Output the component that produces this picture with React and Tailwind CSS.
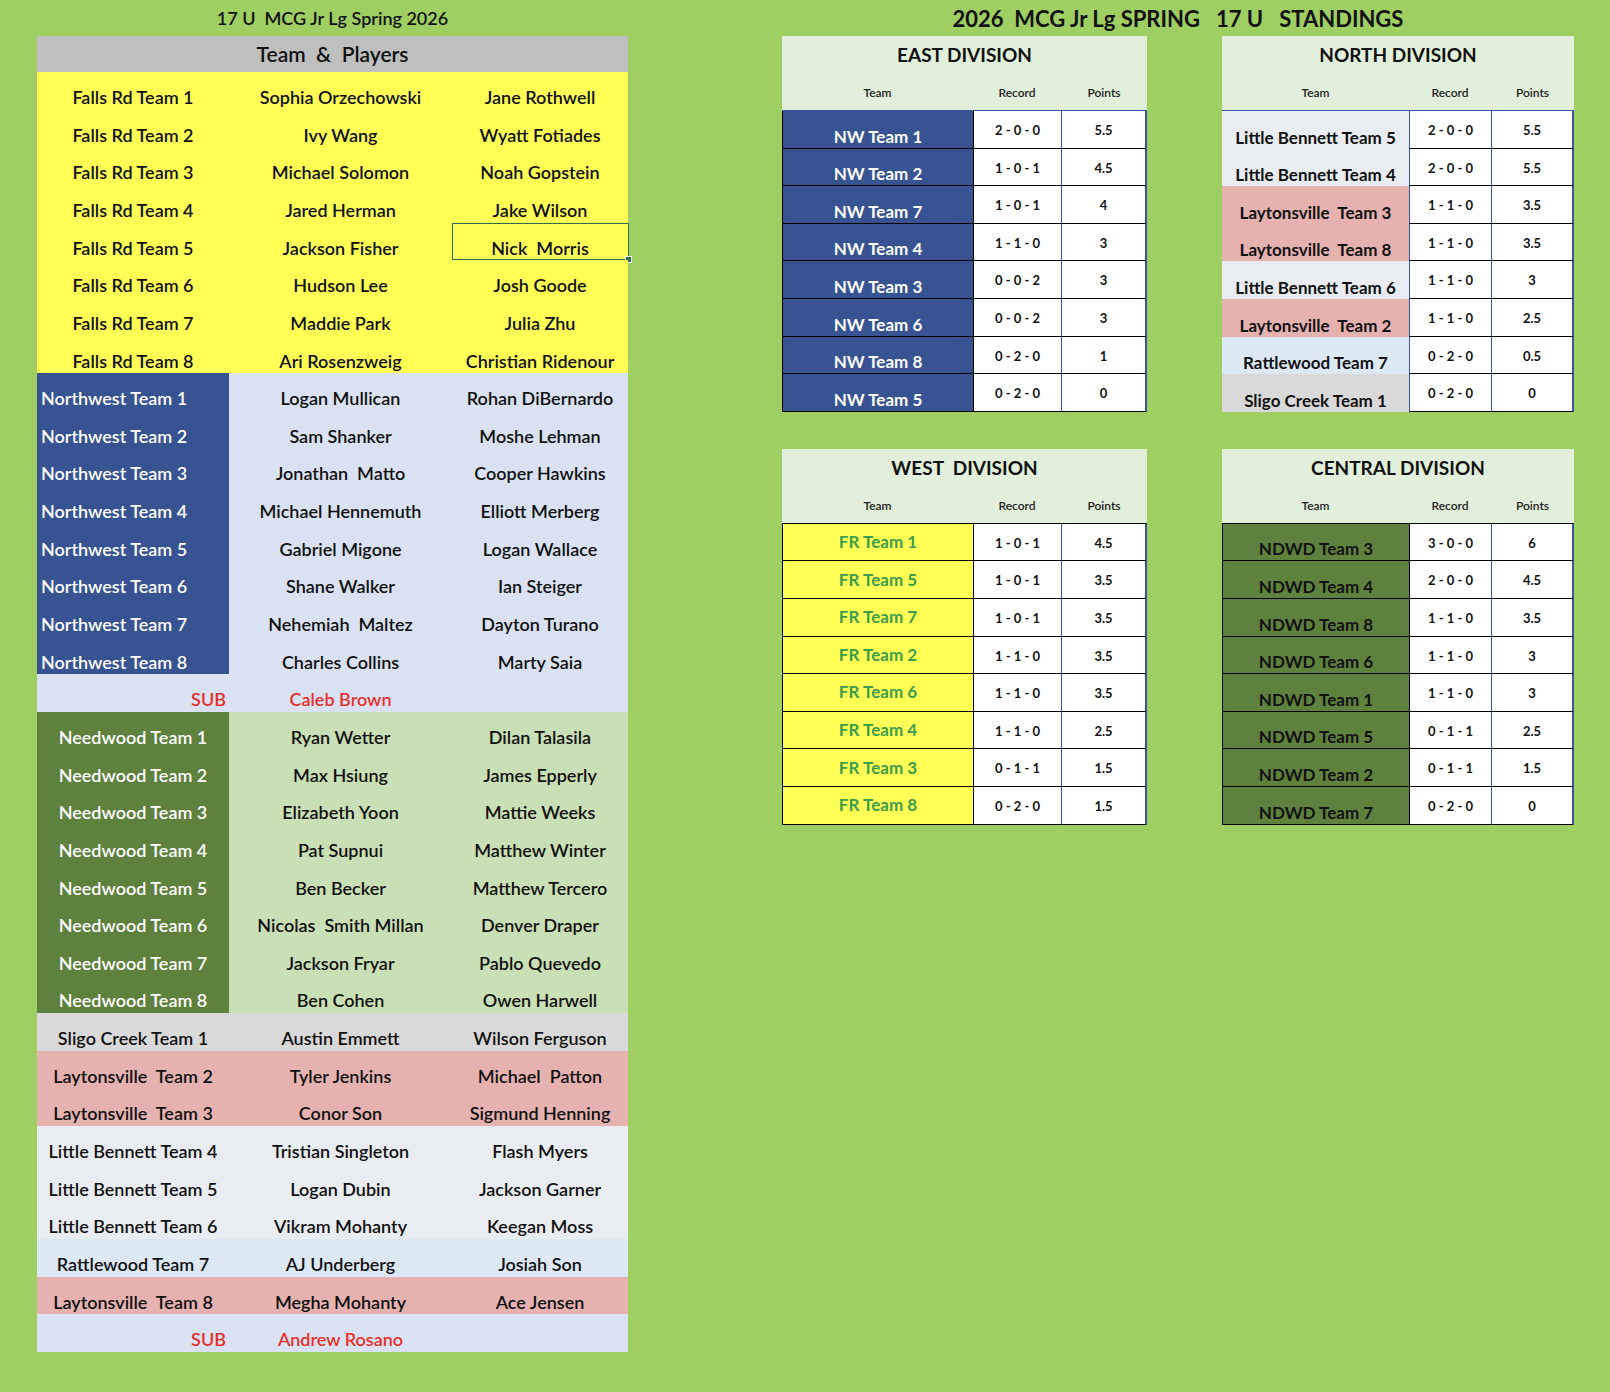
import React from "react";

const font = { fontFamily: "Lato, 'Open Sans', sans-serif" };

// left roster table
const roster = [
  ["Falls Rd Team 1", "Sophia Orzechowski", "Jane Rothwell", "fr"],
  ["Falls Rd Team 2", "Ivy Wang", "Wyatt Fotiades", "fr"],
  ["Falls Rd Team 3", "Michael Solomon", "Noah Gopstein", "fr"],
  ["Falls Rd Team 4", "Jared Herman", "Jake Wilson", "fr"],
  ["Falls Rd Team 5", "Jackson Fisher", "Nick  Morris", "fr", true],
  ["Falls Rd Team 6", "Hudson Lee", "Josh Goode", "fr"],
  ["Falls Rd Team 7", "Maddie Park", "Julia Zhu", "fr"],
  ["Falls Rd Team 8", "Ari Rosenzweig", "Christian Ridenour", "fr"],
  ["Northwest Team 1", "Logan Mullican", "Rohan DiBernardo", "nw"],
  ["Northwest Team 2", "Sam Shanker", "Moshe Lehman", "nw"],
  ["Northwest Team 3", "Jonathan  Matto", "Cooper Hawkins", "nw"],
  ["Northwest Team 4", "Michael Hennemuth", "Elliott Merberg", "nw"],
  ["Northwest Team 5", "Gabriel Migone", "Logan Wallace", "nw"],
  ["Northwest Team 6", "Shane Walker", "Ian Steiger", "nw"],
  ["Northwest Team 7", "Nehemiah  Maltez", "Dayton Turano", "nw"],
  ["Northwest Team 8", "Charles Collins", "Marty Saia", "nw"],
  ["SUB", "Caleb Brown", "", "sub"],
  ["Needwood Team 1", "Ryan Wetter", "Dilan Talasila", "nd"],
  ["Needwood Team 2", "Max Hsiung", "James Epperly", "nd"],
  ["Needwood Team 3", "Elizabeth Yoon", "Mattie Weeks", "nd"],
  ["Needwood Team 4", "Pat Supnui", "Matthew Winter", "nd"],
  ["Needwood Team 5", "Ben Becker", "Matthew Tercero", "nd"],
  ["Needwood Team 6", "Nicolas  Smith Millan", "Denver Draper", "nd"],
  ["Needwood Team 7", "Jackson Fryar", "Pablo Quevedo", "nd"],
  ["Needwood Team 8", "Ben Cohen", "Owen Harwell", "nd"],
  ["Sligo Creek Team 1", "Austin Emmett", "Wilson Ferguson", "sc"],
  ["Laytonsville  Team 2", "Tyler Jenkins", "Michael  Patton", "lay"],
  ["Laytonsville  Team 3", "Conor Son", "Sigmund Henning", "lay"],
  ["Little Bennett Team 4", "Tristian Singleton", "Flash Myers", "lb"],
  ["Little Bennett Team 5", "Logan Dubin", "Jackson Garner", "lb"],
  ["Little Bennett Team 6", "Vikram Mohanty", "Keegan Moss", "lb"],
  ["Rattlewood Team 7", "AJ Underberg", "Josiah Son", "rw"],
  ["Laytonsville  Team 8", "Megha Mohanty", "Ace Jensen", "lay"],
  ["SUB", "Andrew Rosano", "", "sub"],
];

const groupStyle = {
  fr: { first: "bg-[#ffff55] justify-center text-[#111]", rest: "bg-[#ffff55] text-[#111]" },
  nw: { first: "bg-[#375391] justify-start pl-[4px] text-white", rest: "bg-[#d9e1f2] text-[#111]" },
  sub: { first: "bg-[#d9e1f2] justify-end pr-[3px] text-[#e8302b]", rest: "bg-[#d9e1f2] text-[#e8302b]" },
  nd: { first: "bg-[#5e813d] justify-center text-white", rest: "bg-[#c9dfb6] text-[#111]" },
  sc: { first: "bg-[#d9d9d9] justify-center text-[#111]", rest: "bg-[#d9d9d9] text-[#111]" },
  lay: { first: "bg-[#e6b2b0] justify-center text-[#111]", rest: "bg-[#e6b2b0] text-[#111]" },
  lb: { first: "bg-[#e9ecf0] justify-center text-[#111]", rest: "bg-[#e9ecf0] text-[#111]" },
  rw: { first: "bg-[#dde8f5] justify-center text-[#111]", rest: "bg-[#dde8f5] text-[#111]" },
};

function RosterRow({ row }) {
  const [team, p1, p2, group, selected] = row;
  const s = groupStyle[group];
  return (
    <div className="grid grid-cols-[192px_223px_176px] h-[37.65px] text-[18px] font-semibold leading-[21.6px] whitespace-pre">
      <div className={`flex items-end pb-[1px] ${s.first}`}>{team}</div>
      <div className={`flex items-end justify-center pb-[1px] ${s.rest}`}>{p1}</div>
      <div className={`relative flex items-end justify-center pb-[1px] ${s.rest} ${group === "sub" ? "text-[#111]" : ""}`}>
        {p2}
        {selected && (
          <div className="absolute inset-0 -right-[1px] border border-[#2c6e4c]">
            <div className="absolute -right-[4px] -bottom-[4px] w-[7px] h-[7px] bg-[#2c6e4c] border border-white" />
          </div>
        )}
      </div>
    </div>
  );
}

// standings
const east = [
  ["NW Team 1", "2 - 0 - 0", "5.5"],
  ["NW Team 2", "1 - 0 - 1", "4.5"],
  ["NW Team 7", "1 - 0 - 1", "4"],
  ["NW Team 4", "1 - 1 - 0", "3"],
  ["NW Team 3", "0 - 0 - 2", "3"],
  ["NW Team 6", "0 - 0 - 2", "3"],
  ["NW Team 8", "0 - 2 - 0", "1"],
  ["NW Team 5", "0 - 2 - 0", "0"],
];
const north = [
  ["Little Bennett Team 5", "2 - 0 - 0", "5.5", "bg-[#e9ecf0]"],
  ["Little Bennett Team 4", "2 - 0 - 0", "5.5", "bg-[#e9ecf0]"],
  ["Laytonsville  Team 3", "1 - 1 - 0", "3.5", "bg-[#e6b2b0]"],
  ["Laytonsville  Team 8", "1 - 1 - 0", "3.5", "bg-[#e6b2b0]"],
  ["Little Bennett Team 6", "1 - 1 - 0", "3", "bg-[#e9ecf0]"],
  ["Laytonsville  Team 2", "1 - 1 - 0", "2.5", "bg-[#e6b2b0]"],
  ["Rattlewood Team 7", "0 - 2 - 0", "0.5", "bg-[#dde8f5]"],
  ["Sligo Creek Team 1", "0 - 2 - 0", "0", "bg-[#d9d9d9]"],
];
const west = [
  ["FR Team 1", "1 - 0 - 1", "4.5"],
  ["FR Team 5", "1 - 0 - 1", "3.5"],
  ["FR Team 7", "1 - 0 - 1", "3.5"],
  ["FR Team 2", "1 - 1 - 0", "3.5"],
  ["FR Team 6", "1 - 1 - 0", "3.5"],
  ["FR Team 4", "1 - 1 - 0", "2.5"],
  ["FR Team 3", "0 - 1 - 1", "1.5"],
  ["FR Team 8", "0 - 2 - 0", "1.5"],
];
const central = [
  ["NDWD Team 3", "3 - 0 - 0", "6"],
  ["NDWD Team 4", "2 - 0 - 0", "4.5"],
  ["NDWD Team 8", "1 - 1 - 0", "3.5"],
  ["NDWD Team 6", "1 - 1 - 0", "3"],
  ["NDWD Team 1", "1 - 1 - 0", "3"],
  ["NDWD Team 5", "0 - 1 - 1", "2.5"],
  ["NDWD Team 2", "0 - 1 - 1", "1.5"],
  ["NDWD Team 7", "0 - 2 - 0", "0"],
];

function Division({ title, rows, wide, teamClass, recordBorder, bodyTop }) {
  const cols = wide ? "grid-cols-[191px_88px_86px]" : "grid-cols-[187px_82px_83px]";
  return (
    <div className={wide ? "w-[365px]" : "w-[352px]"}>
      <div className="bg-[#e2efda]">
        <div className="h-[38px] flex items-end justify-center text-[19px] font-bold leading-[22px] pb-[8px] text-[#111] whitespace-pre">
          {title}
        </div>
        <div className={`grid ${cols} h-[36px] items-center pt-[2px] text-[12px] font-semibold text-[#222]`}>
          <div className="text-center">Team</div>
          <div className="text-center">Record</div>
          <div className="text-center">Points</div>
        </div>
      </div>
      <div className={`border-t ${bodyTop}`}>
        {rows.map((r, i) => (
          <div key={i} className={`grid ${cols} h-[37.6px]`}>
            <div className={`flex justify-center whitespace-pre text-[17px] font-bold leading-[20px] ${teamClass(r)}`}>
              {r[0]}
            </div>
            <div className={`flex items-center justify-center pt-[3px] bg-white border-b border-black border-l ${recordBorder} text-[13px] font-bold text-[#111] whitespace-pre`}>
              {r[1]}
            </div>
            <div className="flex items-center justify-center pt-[3px] bg-white border-b border-black border-l border-l-[#3656a5] border-r-2 border-r-[#3656a5] text-[13px] font-bold text-[#111]">
              {r[2]}
            </div>
          </div>
        ))}
      </div>
    </div>
  );
}

export default function App() {
  return (
    <div className="w-[1610px] min-h-[1392px] bg-[#9fcf63] flex" style={font}>
      {/* teams & players */}
      <div className="ml-[37px] w-[591px]">
        <div className="h-[36px] flex items-center justify-center text-[18px] font-semibold text-[#111] whitespace-pre">
          17 U  MCG Jr Lg Spring 2026
        </div>
        <div className="h-[36px] bg-[#bfbfbf] flex items-center justify-center text-[21px] font-semibold text-[#111] whitespace-pre">
          Team  &  Players
        </div>
        {roster.map((r, i) => (
          <RosterRow key={i} row={r} />
        ))}
      </div>

      {/* standings */}
      <div className="ml-[154px] w-[792px]">
        <div className="h-[36px] flex items-center justify-center text-[22px] font-bold text-[#111] whitespace-pre">
          2026  MCG Jr Lg SPRING   17 U   STANDINGS
        </div>
        <div className="flex gap-[75px]">
          <Division
            title="EAST DIVISION"
            rows={east}
            wide
            bodyTop="border-[#3656a5]"
            recordBorder="border-l-black"
            teamClass={() => "items-end pb-[1px] bg-[#375391] text-white border-l border-b border-black"}
          />
          <Division
            title="NORTH DIVISION"
            rows={north}
            bodyTop="border-[#3656a5]"
            recordBorder="border-l-[#3656a5]"
            teamClass={(r) => `items-end pb-[1px] text-[#111] ${r[3]}`}
          />
        </div>
        <div className="flex gap-[75px] mt-[37px]">
          <Division
            title="WEST  DIVISION"
            rows={west}
            wide
            bodyTop="border-black"
            recordBorder="border-l-black"
            teamClass={() => "items-center bg-[#ffff55] text-[#3c9e4a] border-l border-b border-black"}
          />
          <Division
            title="CENTRAL DIVISION"
            rows={central}
            bodyTop="border-black"
            recordBorder="border-l-black"
            teamClass={() => "items-end pb-[1px] bg-[#5e813d] text-[#111] border-l border-b border-black"}
          />
        </div>
      </div>
    </div>
  );
}
